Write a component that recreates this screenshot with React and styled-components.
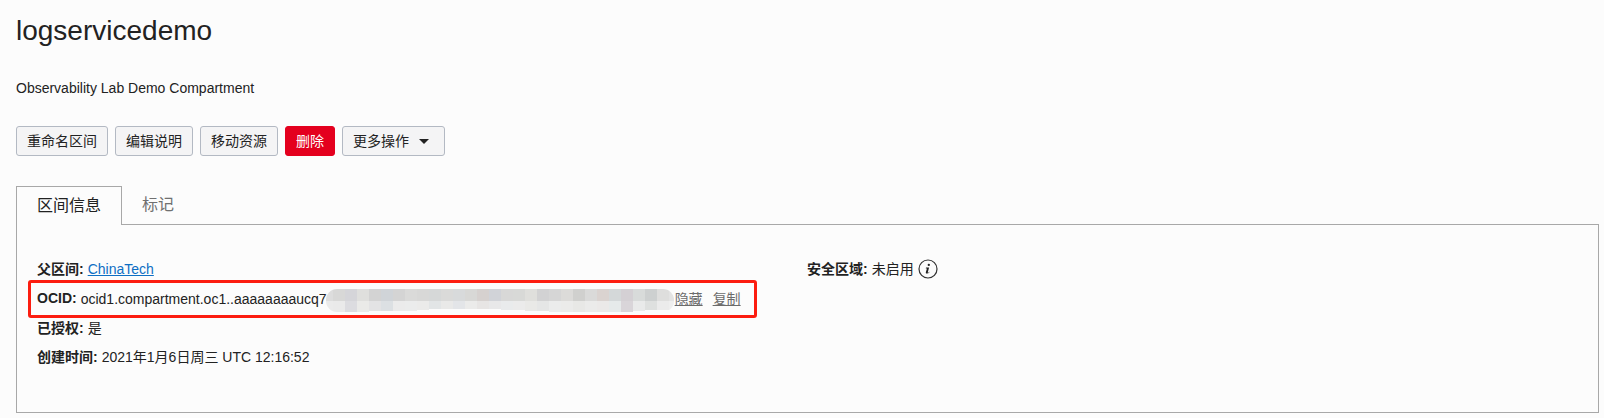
import React from "react";
import styled, { createGlobalStyle } from "styled-components";

const GlobalStyle = createGlobalStyle`
  body {
    margin: 0;
    background: #fcfcfc;
    color: #222;
    font-family: "Liberation Sans", Arial, "Noto Sans CJK SC", sans-serif;
    font-size: 14px;
  }
  *, *::before, *::after { box-sizing: border-box; }
`;

const Page = styled.main`
  height: 418px;
  padding: 14px 5px 0 16px;
  overflow: hidden;
`;

const Title = styled.h1`
  margin: 0;
  font-size: 28px;
  line-height: 34px;
  font-weight: 400;
`;

const Description = styled.p`
  margin: 30px 0 28px;
  line-height: 20px;
`;

const Toolbar = styled.div`
  display: flex;
  gap: 7px;
  height: 30px;
`;

const Button = styled.button`
  display: flex;
  align-items: center;
  height: 30px;
  padding: 0 10px;
  font: inherit;
  line-height: 20px;
  white-space: nowrap;
  border-radius: 3px;
  border: 1px solid ${(p) => (p.$danger ? "#e4001e" : "#b3b9c3")};
  background: ${(p) => (p.$danger ? "#e4001e" : "#f4f4f5")};
  color: ${(p) => (p.$danger ? "#fff" : "#222")};
`;

const Caret = styled.span`
  margin: 0 5px 0 10px;
  border: 5px solid transparent;
  border-top-color: #222;
  border-bottom: 0;
`;

const TabBar = styled.div`
  display: flex;
  margin-top: 30px;
  height: 39px;
`;

const Tab = styled.div`
  position: relative;
  width: ${(p) => (p.$active ? "106px" : "74px")};
  height: 39px;
  padding: ${(p) => (p.$active ? "7px 0 0 20px" : "6px 0 0 19px")};
  font-size: 16px;
  line-height: 24px;
  color: ${(p) => (p.$active ? "#222" : "#707070")};
  border: 1px solid ${(p) => (p.$active ? "#a8a8a8" : "transparent")};
  border-bottom: 0;
  background: ${(p) => (p.$active ? "#fcfcfc" : "none")};
`;

const Panel = styled.section`
  display: grid;
  grid-template-columns: 770px 1fr;
  align-items: start;
  margin-top: -1px;
  height: 189px;
  padding: 29px 20px;
  border: 1px solid #a8a8a8;
`;

const Column = styled.div`
  display: flex;
  flex-direction: column;
`;

const Row = styled.div`
  display: flex;
  align-items: center;
  height: 29px;
  line-height: 20px;
  white-space: pre;
`;

const Label = styled.strong`
  margin-right: 4px;
`;

const Link = styled.a`
  color: ${(p) => (p.$muted ? "#6b6b6b" : "#0e6fc4")};
  text-decoration: underline;
  margin-right: ${(p) => (p.$muted ? "10px" : "0")};
`;

const OcidRow = styled(Row)`
  height: 38px;
  width: 729px;
  margin: -3px 0 -5px -9px;
  padding-left: 6px;
  border: 3px solid #fc1d10;
  border-radius: 3px;

  ${Label} {
    padding-bottom: 2px;
  }
`;

const Mosaic = styled.span`
  display: grid;
  grid-template-columns: 7px repeat(28, 12px) 5px;
  grid-template-rows: 12px 11px;
  width: 348px;
  margin: 3px 1px 0 -1px;
  overflow: hidden;
  border-radius: 11px;
`;

const Cell = styled.span`
  height: ${(p) => p.$height}px;
  background: ${(p) => p.$tone};
`;

const UPPER = "dddddd d8d8d7 d5d5d9 dfdfdd d3d3d3 d0d4d8 d4d4d4 dadad9 d8d8d7 d6d8d8 dadad9 d8dadb d8d8d6 d6d1cf d1d3d8 d8d8d7 d8d9d7 dfdfdc d2d2d3 d6d6d6 dcdbd9 d0d0ce dadad9 dad3d0 d4d8d9 d4d0d4 d8dbda cdd0d0 dededd e3e3e3".split(" ");
const LOWER = "ebebeb eaeaea dcdce0 eaeae8 e3e3e4 dce0e3 ebebeb ebecec ebebea e2e5e6 e9e9e8 e3e5e8 ebebea e7e5e4 e8e8e9 e9ebec ebebeb e9e9e7 e5e6e6 ebecec ebebea e8e8e6 ebebea ebe9e8 e6eaea d9d5d9 e9eaea dee0df ebebeb eeeeee".split(" ");
const LOWER_HEIGHTS = [11, 11, 11, 11, 10, 10, 10, 10, 9, 8, 8, 8, 8, 8, 8, 9, 9, 10, 10, 11, 11, 11, 11, 11, 11, 11, 10, 9, 9, 9];

function InfoIcon() {
  return (
    <svg width="20" height="20" viewBox="0 0 20 20" style={{ marginLeft: 4 }} aria-hidden="true">
      <circle cx="10" cy="10" r="9" fill="none" stroke="#333" strokeWidth="1.2" />
      <circle cx="10.8" cy="5.9" r="1.15" fill="#222" />
      <path d="M8 8.6h3.1l-1.3 4.7c-.1.5.3.5.7.1l.7-.7.4.3c-.8 1-1.7 1.5-2.6 1.5-1 0-1.4-.6-1.1-1.6l1-3.5H7.8z" fill="#222" />
    </svg>
  );
}

export default function App() {
  return (
    <>
      <GlobalStyle />
      <Page>
        <Title>logservicedemo</Title>
        <Description>Observability Lab Demo Compartment</Description>
        <Toolbar>
          <Button>重命名区间</Button>
          <Button>编辑说明</Button>
          <Button>移动资源</Button>
          <Button $danger>删除</Button>
          <Button>更多操作<Caret /></Button>
        </Toolbar>
        <TabBar>
          <Tab $active>区间信息</Tab>
          <Tab>标记</Tab>
        </TabBar>
        <Panel>
          <Column>
            <Row><Label>父区间:</Label><Link>ChinaTech</Link></Row>
            <OcidRow>
              <Label>OCID:</Label>ocid1.compartment.oc1..aaaaaaaaucq7
              <Mosaic>
                {UPPER.map((tone, i) => <Cell key={`u${i}`} $tone={`#${tone}`} $height={12} />)}
                {LOWER.map((tone, i) => <Cell key={`l${i}`} $tone={`#${tone}`} $height={LOWER_HEIGHTS[i]} />)}
              </Mosaic>
              <Link $muted>隐藏</Link>
              <Link $muted>复制</Link>
            </OcidRow>
            <Row><Label>已授权:</Label>是</Row>
            <Row><Label>创建时间:</Label>2021年1月6日周三 UTC 12:16:52</Row>
          </Column>
          <Column>
            <Row><Label>安全区域:</Label>未启用<InfoIcon /></Row>
          </Column>
        </Panel>
      </Page>
    </>
  );
}
